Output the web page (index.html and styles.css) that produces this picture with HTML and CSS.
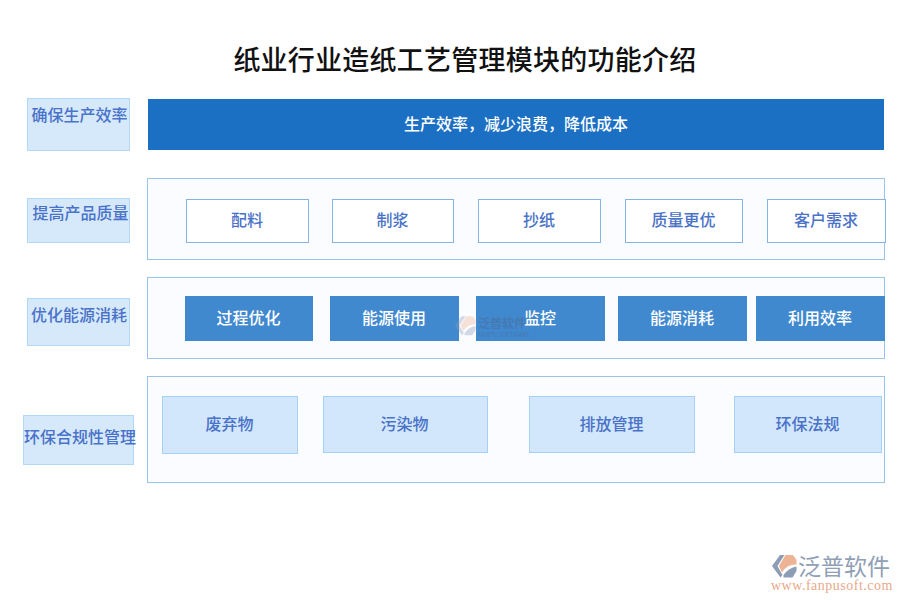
FILE: index.html
```html
<!DOCTYPE html>
<html lang="zh-CN">
<head>
<meta charset="utf-8">
<title>纸业行业造纸工艺管理模块的功能介绍</title>
<link rel="stylesheet" href="styles.css">
</head>
<body>
<svg class="defs" width="0" height="0" aria-hidden="true">
  <symbol id="mark" viewBox="0 0 26 24">
    <path fill="#8c9db5" d="M9 1 L13.5 1 L6.5 12 L11.5 21 L9.5 23.5 L1 12 Z"/>
    <path fill="#eeb294" d="M14.5 1 L22 1 L25.5 6 L25.5 10.5 Q16 10 11 18.5 L8 12 Z"/>
    <path fill="#8c9db5" d="M12.5 23.5 L21.5 23.5 L25.5 17 L25.5 12.5 Q18 13.5 12.5 21 Z"/>
  </symbol>
</svg>
<main class="page">
  <h1 class="title">纸业行业造纸工艺管理模块的功能介绍</h1>

  <section class="row row-efficiency">
    <div class="label">确保生产效率</div>
    <div class="bar">生产效率，减少浪费，降低成本</div>
  </section>

  <section class="row row-quality">
    <div class="label">提高产品质量</div>
    <div class="panel">
      <div class="box">配料</div>
      <div class="box">制浆</div>
      <div class="box">抄纸</div>
      <div class="box">质量更优</div>
      <div class="box">客户需求</div>
    </div>
  </section>

  <section class="row row-energy">
    <div class="label">优化能源消耗</div>
    <div class="panel">
      <div class="box">过程优化</div>
      <div class="box">能源使用</div>
      <div class="box">监控</div>
      <div class="box">能源消耗</div>
      <div class="box">利用效率</div>
    </div>
  </section>

  <section class="row row-green">
    <div class="label">环保合规性管理</div>
    <div class="panel">
      <div class="box">废弃物</div>
      <div class="box">污染物</div>
      <div class="box">排放管理</div>
      <div class="box">环保法规</div>
    </div>
  </section>

  <footer class="brand">
    <svg class="brand-mark"><use href="#mark"/></svg>
    <span class="brand-name">泛普软件</span>
    <span class="brand-url">www.fanpusoft.com</span>
  </footer>
</main>

<div class="watermark">
  <svg class="wm-mark"><use href="#mark"/></svg>
  <div class="wm-text">
    <span class="wm-name">泛普软件</span>
    <span class="wm-en">FANPU SOFTWARE</span>
  </div>
</div>
</body>
</html>
```

FILE: styles.css
```css
* { box-sizing: border-box; }

html, body {
  margin: 0;
  width: 900px;
  height: 600px;
  overflow: hidden;
  background: #fff;
}

body {
  position: relative;
  font-family: "Noto Sans CJK SC", "Liberation Sans", sans-serif;
  color: #4a72c8;
}

.defs { position: absolute; }

.page {
  display: flex;
  flex-direction: column;
  height: 600px;
}

.title {
  margin: 45px 0 23px;
  padding-left: 30px;
  font-size: 27px;
  line-height: 28px;
  letter-spacing: 0.25px;
  font-weight: 500;
  color: #111;
  text-align: center;
  height: 30px;
}

.row {
  display: grid;
  grid-template-columns: 147px 738px;
  align-items: start;
}

.label {
  width: 103px;
  margin-left: 27px;
  padding-left: 2px;
  background: #d6e9fb;
  border: 1px solid #b3d7f6;
  font-size: 16px;
  line-height: 20px;
  font-weight: 500;
  text-align: center;
  white-space: nowrap;
}

.panel {
  display: flex;
  background: #fbfcff;
  border: 1px solid #9cc4e8;
}

.box {
  display: flex;
  flex: none;
  align-items: center;
  justify-content: center;
  padding: 0 1px 4px 0;
  font-size: 16px;
  font-weight: 500;
}

/* row 1 */
.row-efficiency { height: 53px; }
.row-efficiency .label { height: 53px; padding-top: 5px; }
.bar {
  width: 736px;
  height: 51px;
  margin: 1px 0 0 1px;
  background: #1c70c3;
  color: #fff;
  font-size: 16px;
  font-weight: 500;
  line-height: 49px;
  text-align: center;
}

/* row 2 */
.row-quality { margin-top: 27px; }
.row-quality .label { height: 45px; margin-top: 20px; padding: 3px 0 0 4px; }
.row-quality .panel { height: 82px; padding: 20px 0 0 38px; }
.row-quality .box {
  height: 44px;
  background: #fff;
  border: 1px solid #85b4e3;
}
.row-quality .box:nth-child(1) { width: 123px; }
.row-quality .box:nth-child(2) { width: 122px; margin-left: 23px; }
.row-quality .box:nth-child(3) { width: 123px; margin-left: 24px; }
.row-quality .box:nth-child(4) { width: 118px; margin-left: 24px; }
.row-quality .box:nth-child(5) { width: 119px; margin-left: 24px; }

/* row 3 */
.row-energy { margin-top: 17px; }
.row-energy .label { height: 48px; margin-top: 21px; padding: 5px 0 0 1px; }
.row-energy .panel { height: 82px; padding: 18px 0 0 37px; }
.row-energy .box {
  height: 45px;
  background: #4189cf;
  color: #fff;
}
.row-energy .box:nth-child(1) { width: 128px; }
.row-energy .box:nth-child(2) { width: 129px; margin-left: 17px; }
.row-energy .box:nth-child(3) { width: 129px; margin-left: 17px; }
.row-energy .box:nth-child(4) { width: 129px; margin-left: 13px; }
.row-energy .box:nth-child(5) { width: 129px; margin-left: 9px; }

/* row 4 */
.row-green { margin-top: 17px; }
.row-green .label {
  width: 111px;
  height: 50px;
  margin: 39px 0 0 23px;
  padding: 10px 1px 0 0;
}
.row-green .panel { height: 107px; padding: 19px 0 0 14px; }
.row-green .box {
  height: 57px;
  padding-bottom: 4px;
  background: #d2e7fb;
  border: 1px solid #a6d0f5;
}
.row-green .box:nth-child(1) { width: 136px; height: 58px; }
.row-green .box:nth-child(2) { width: 165px; margin-left: 25px; padding-right: 2px; }
.row-green .box:nth-child(3) { width: 166px; margin-left: 41px; }
.row-green .box:nth-child(4) { width: 148px; margin-left: 39px; }

/* logo, bottom right */
.brand {
  display: grid;
  grid-template-columns: 27px auto;
  align-self: flex-end;
  margin: auto 10px 7px 0;
  width: 119px;
}
.brand-mark { width: 26px; height: 24px; margin-top: 1px; }
.brand-name {
  font-size: 23px;
  line-height: 24px;
  color: #8fa0b6;
  white-space: nowrap;
}
.brand-url {
  grid-column: 1 / -1;
  font-family: "Liberation Serif", serif;
  font-size: 14px;
  line-height: 15px;
  letter-spacing: 0.5px;
  color: #e9a88a;
  white-space: nowrap;
}

/* faint stamp over the middle of the page */
.watermark {
  position: absolute;
  left: 454px;
  top: 314px;
  display: flex;
  gap: 2px;
  pointer-events: none;
}
.wm-mark { width: 22px; height: 23px; opacity: 0.36; }
.wm-text {
  display: flex;
  flex-direction: column;
  opacity: 0.6;
}
.wm-name {
  font-size: 12px;
  line-height: 17px;
  font-weight: 700;
  color: #4a6f9f;
  white-space: nowrap;
}
.wm-en {
  font-size: 6px;
  line-height: 7px;
  color: #4a6f9f;
  white-space: nowrap;
}
```
